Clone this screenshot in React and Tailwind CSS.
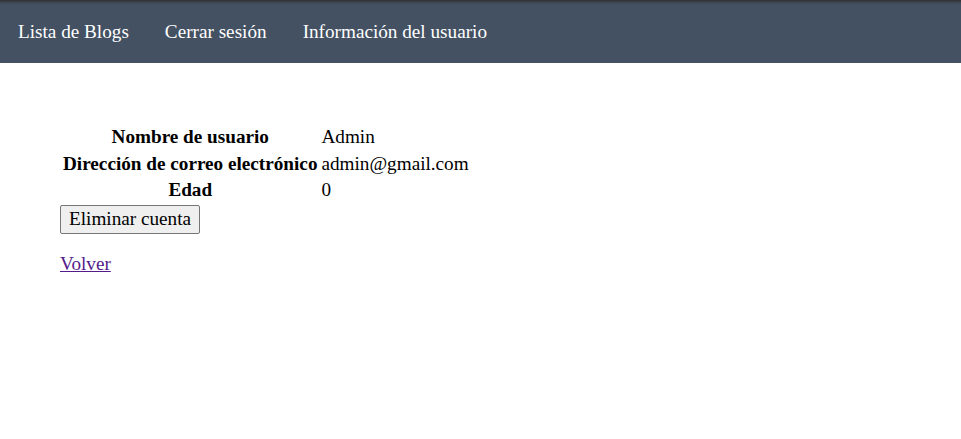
import React from "react";

export default function App() {
  const font = { fontFamily: '"Liberation Serif", "Times New Roman", serif' };
  return (
    <div style={font} className="min-h-[439px] bg-white text-black text-[19.2px] leading-[22px]">
      <nav className="h-[63px] flex items-center bg-[linear-gradient(to_bottom,#2f3133_0px,#3f4a57_3px,#435163_5px)] text-white">
        <a className="px-[18px] cursor-pointer">Lista de Blogs</a>
        <a className="px-[18px] cursor-pointer">Cerrar sesión</a>
        <a className="px-[18px] cursor-pointer">Información del usuario</a>
      </nav>
      <main className="px-[60px] pt-[60px]">
        <table className="border-separate border-spacing-[2px] leading-[22.5px]">
          <tbody>
            <tr>
              <th className="text-center font-bold p-[1px]">Nombre de usuario</th>
              <td className="p-[1px]">Admin</td>
            </tr>
            <tr>
              <th className="text-center font-bold p-[1px]">Dirección de correo electrónico</th>
              <td className="p-[1px]">admin@gmail.com</td>
            </tr>
            <tr>
              <th className="text-center font-bold p-[1px]">Edad</th>
              <td className="p-[1px]">0</td>
            </tr>
          </tbody>
        </table>
        <button className="bg-[#efefef] border border-[#767676] rounded-[2px] px-[8px] py-[2.5px] leading-[22px]">
          Eliminar cuenta
        </button>
        <p className="mt-[19px]">
          <a className="underline text-[#551a8b] cursor-pointer">Volver</a>
        </p>
      </main>
    </div>
  );
}
